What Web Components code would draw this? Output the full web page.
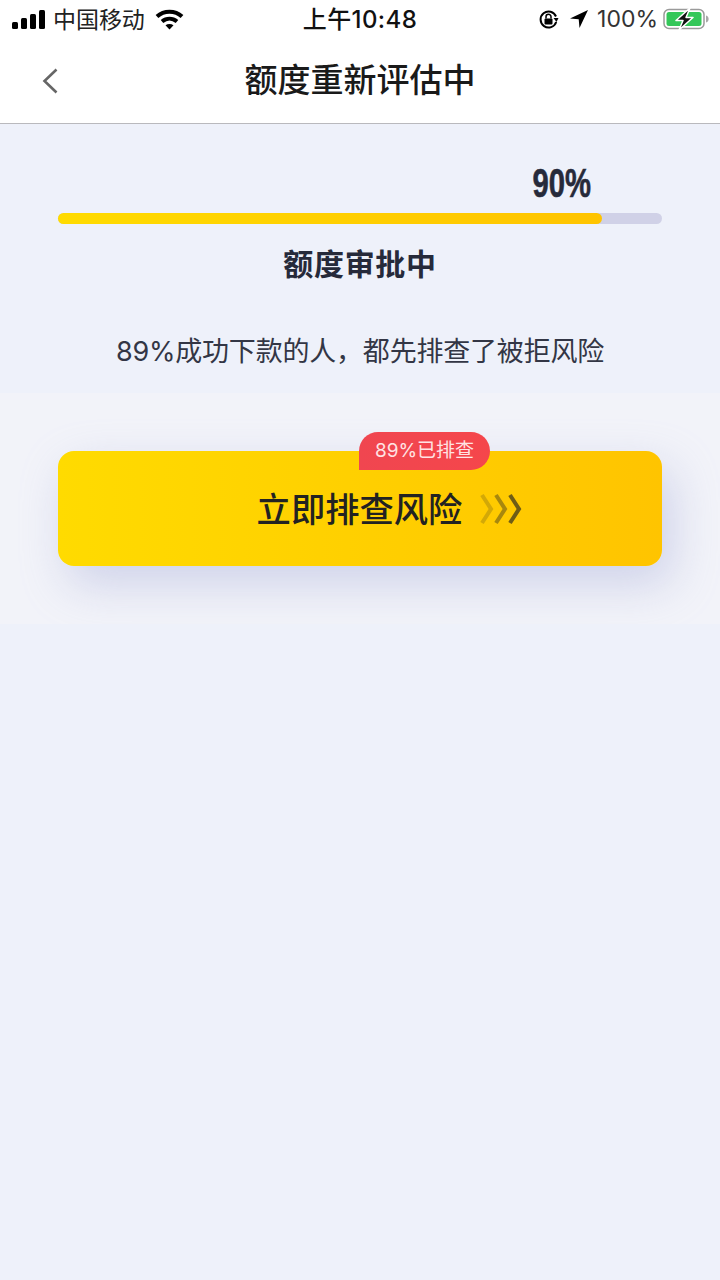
<!DOCTYPE html>
<html lang="zh">
<head>
<meta charset="utf-8">
<title>额度重新评估中</title>
<style>
    html, body { margin: 0; padding: 0; }
    body {
        width: 720px;
        height: 1280px;
        overflow: hidden;
        background: #eef1fa;
        font-family: "Inter", "Noto Sans CJK SC", sans-serif;
    }
</style>
</head>
<body>
<status-bar></status-bar>
<nav-header title="额度重新评估中"></nav-header>
<progress-panel percent="90" label="额度审批中"></progress-panel>
<p-tip>89%成功下款的人，都先排查了被拒风险</p-tip>
<risk-button badge="89%已排查">立即排查风险</risk-button>

<script>
class StatusBar extends HTMLElement {
    constructor(){
        super();
        this.attachShadow({mode: 'open'});
        this.shadowRoot.innerHTML = `
        <style>
            :host { display: flex; justify-content: space-between; align-items: center; height: 40px; background: #fff; color: #111; padding: 0 11px 0 12px; font-family: "Inter", "Noto Sans CJK SC", sans-serif; font-size: 23px; position: relative; }
            .side { display: flex; align-items: center; }
            .carrier { margin: -5px 0 0 8px; color: #222; letter-spacing: -.05px; }
            .wifi { margin: -2px 0 0 10px; }
            .time { position: absolute; left: 0; right: 0; top: 4px; line-height: 32px; text-align: center; font-weight: 500; font-size: 24px; letter-spacing: .4px; color: #111; }
            .pct { margin: -2px 0 0 8px; color: #333; font-size: 23px; }
            .loc { margin-left: 10px; margin-top: -2px; }
            .bat { margin-left: 5px; margin-top: -2px; }
            .rot { margin-top: -2px; }
            svg { display: block; }
        </style>
        <div class="side">
            <svg width="33" height="20" viewBox="0 0 33 20"><rect x="0" y="12" width="6" height="7" rx="1.5" fill="#000"/><rect x="9" y="8" width="6" height="11" rx="1.5" fill="#000"/><rect x="18" y="4" width="6" height="15" rx="1.5" fill="#000"/><rect x="27" y="0" width="6" height="19" rx="1.5" fill="#000"/></svg>
            <span class="carrier">中国移动</span>
            <svg class="wifi" width="29" height="21" viewBox="0 0 29 21" fill="none" stroke="#000" stroke-width="4"><path d="M2 7.5C9 1 20 1 27 7.5"/><path d="M7 12.5C11.500 8.700 17.500 8.700 22 12.500"/><path d="M14.500 20.500L10.500 16.300C12.800 14.700 16.200 14.700 18.500 16.300Z" fill="#000" stroke="none"/></svg>
        </div>
        <span class="time">上午10:48</span>
        <div class="side">
            <svg class="rot" width="21" height="21" viewBox="0 0 21 21" fill="none"><path d="M18 7.500A8 8 0 1 0 18.200 13" stroke="#000" stroke-width="2"/><path d="M20.500 9L15.500 9L18.500 13Z" fill="#000"/><rect x="6.500" y="9.500" width="8" height="6" rx="1" fill="#000"/><path d="M8 9.500V7.800a2.500 2.500 0 0 1 5 0V9.500" stroke="#000" stroke-width="1.500"/></svg>
            <svg class="loc" width="20" height="20" viewBox="0 0 20 20"><path d="M19 1L1 9.500L9.700 10.300L10.500 19Z" fill="#000"/></svg>
            <span class="pct">100%</span>
            <svg class="bat" width="46" height="22" viewBox="0 0 46 22" fill="none"><rect x="1" y="1.500" width="40" height="19" rx="5" stroke="#9a9a9a" stroke-width="1.500"/><rect x="3.500" y="4" width="35" height="14" rx="2.500" fill="#34c759"/><path d="M43 7.500c2 .6 2.600 2 2.600 3.500s-.6 2.900-2.600 3.500Z" fill="#a8a8a8"/><path d="M27 0L13 12.500h7L16 22 30 9.500h-7Z" fill="#111" stroke="#fff" stroke-width="1.500" stroke-linejoin="round"/></svg>
        </div>`;
    }
}
customElements.define('status-bar', StatusBar);

class NavHeader extends HTMLElement {
    constructor(){
        super();
        this.attachShadow({mode: 'open'});
        this.shadowRoot.innerHTML = `
        <style>
            :host { display: flex; align-items: center; justify-content: center; height: 83px; background: #fff; border-bottom: 1px solid #b9b9bd; position: relative; font-family: "Inter", "Noto Sans CJK SC", sans-serif; }
            h1 { margin: 0; font-size: 33px; font-weight: 500; color: #1a1a1a; line-height: 1; position: relative; top: -1px; }
            svg { position: absolute; left: 42px; top: 28px; }
        </style>
        <svg width="16" height="26" viewBox="0 0 16 26" fill="none"><path d="M14.500 1.500L2.500 13L14.500 24.500" stroke="#666" stroke-width="2.600"/></svg>
        <h1></h1>`;
        this.shadowRoot.querySelector('h1').innerText = this.getAttribute('title');
    }
}
customElements.define('nav-header', NavHeader);

class ProgressPanel extends HTMLElement {
    constructor(){
        super();
        this.attachShadow({mode: 'open'});
        this.shadowRoot.innerHTML = `
        <style>
            :host { display: block; padding: 38px 58px 0; font-family: "Inter", "Noto Sans CJK SC", sans-serif; color: #262a3a; }
            .num { display: flex; justify-content: flex-end; height: 44px; padding-right: 71px; }
            .num span { display: inline-block; font: 700 40px/42px "Liberation Sans", sans-serif; transform: scaleX(.73); transform-origin: right center; color: #262a3a; -webkit-text-stroke: .6px #262a3a; }
            .track { height: 11px; border-radius: 5.500px; background: #d0d1e7; margin-top: 7px; }
            .fill { height: 100%; border-radius: 5.500px; background: linear-gradient(90deg, #ffdb00, #ffc400); }
            .label { margin-top: 20px; text-align: center; font-size: 30px; font-weight: 700; line-height: 40px; letter-spacing: .7px; }
        </style>
        <div class="num"><span></span></div>
        <div class="track"><div class="fill"></div></div>
        <div class="label"></div>`;
        const pct = this.getAttribute('percent');
        this.shadowRoot.querySelector('.num span').innerText = pct + '%';
        this.shadowRoot.querySelector('.fill').style.width = pct + '%';
        this.shadowRoot.querySelector('.label').innerText = this.getAttribute('label');
    }
}
customElements.define('progress-panel', ProgressPanel);

class PTip extends HTMLElement {
    constructor(){
        super();
        this.attachShadow({mode: 'open'});
        this.shadowRoot.innerHTML = `
        <style>
            :host { display: block; margin-top: 48px; text-align: center; font-size: 27px; line-height: 40px; letter-spacing: -.2px; color: #333645; font-family: "Inter", "Noto Sans CJK SC", sans-serif; }
        </style>
        <slot></slot>`;
    }
}
customElements.define('p-tip', PTip);

class RiskButton extends HTMLElement {
    constructor(){
        super();
        this.attachShadow({mode: 'open'});
        this.shadowRoot.innerHTML = `
        <style>
            :host { display: block; margin-top: 21px; height: 231px; padding: 58px 58px 0; box-sizing: border-box; background: #f2f3f9; overflow: hidden; font-family: "Inter", "Noto Sans CJK SC", sans-serif; }
            .btn { position: relative; height: 115px; border-radius: 16px; background: linear-gradient(90deg, #ffdb00, #ffc400); box-shadow: 10px 18px 46px rgba(165, 170, 215, .45); display: flex; align-items: center; justify-content: center; gap: 17px; padding-left: 60px; box-sizing: border-box; }
            .txt { font-size: 34.300px; font-weight: 500; color: #222; position: relative; top: -2px; }
            .badge { position: absolute; left: 301px; top: -19px; height: 38px; width: 131px; box-sizing: border-box; border-radius: 19px 19px 19px 0; background: linear-gradient(90deg, #f04650, #f5464b); color: #ffe3e3; font-size: 19px; line-height: 38px; text-align: center; }
            svg { display: block; }
        </style>
        <div class="btn">
            <span class="badge"></span>
            <span class="txt"><slot></slot></span>
            <svg width="44" height="32" viewBox="0 0 44 32" fill="none" stroke-width="4"><path d="M3 2L12 16L3 30" stroke="#222" stroke-opacity=".2"/><path d="M17 2L26 16L17 30" stroke="#222" stroke-opacity=".4"/><path d="M31 2L40 16L31 30" stroke="#222" stroke-opacity=".65"/></svg>
        </div>`;
        this.shadowRoot.querySelector('.badge').innerText = this.getAttribute('badge');
    }
}
customElements.define('risk-button', RiskButton);
</script>
</body>
</html>
